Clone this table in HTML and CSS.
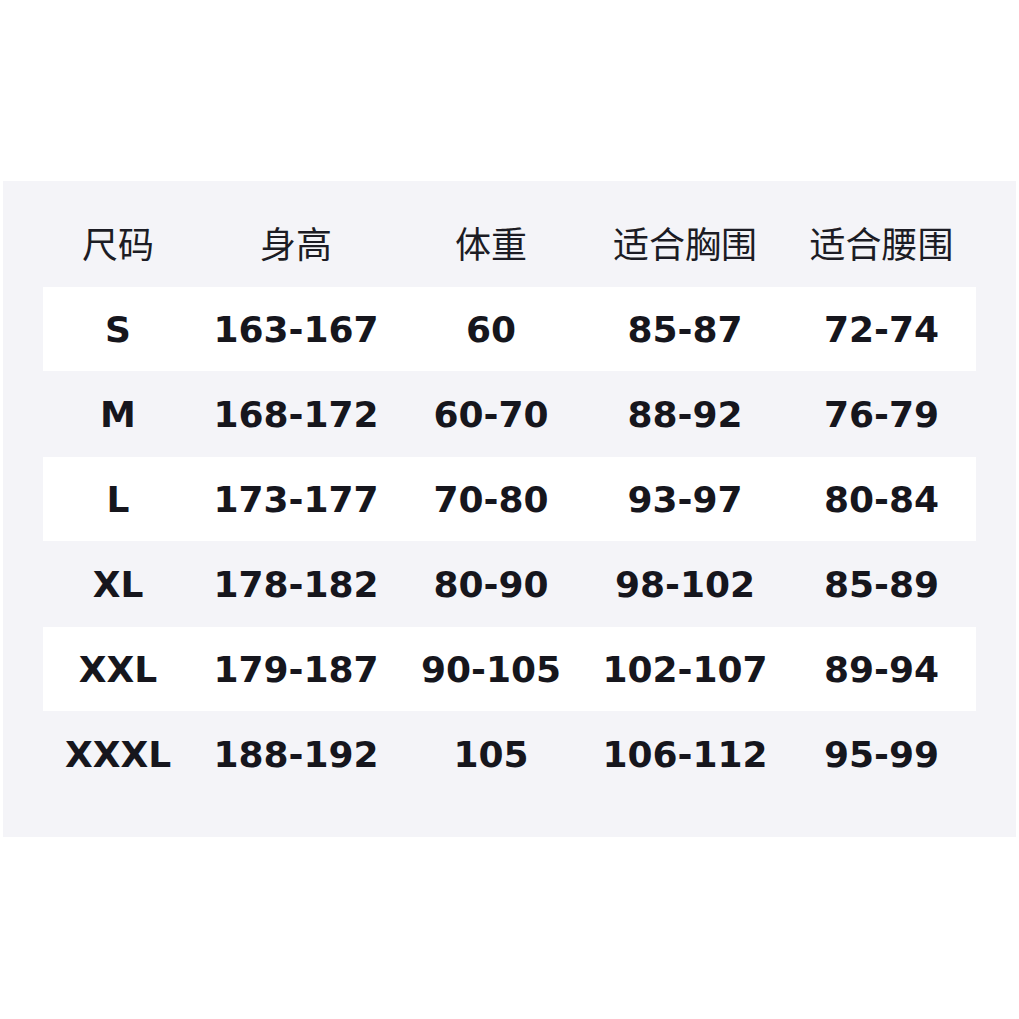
FILE: index.html
```
<!DOCTYPE html>
<html lang="zh">
<head>
<meta charset="utf-8">
<link rel="stylesheet" href="styles.css">
</head>
<body>
<div class="panel">
  <div class="table">
    <div class="row head">
      <div class="cell">尺码</div><div class="cell">身高</div><div class="cell">体重</div><div class="cell">适合胸围</div><div class="cell">适合腰围</div>
    </div>
    <div class="row white">
      <div class="cell">S</div><div class="cell">163-167</div><div class="cell">60</div><div class="cell">85-87</div><div class="cell">72-74</div>
    </div>
    <div class="row">
      <div class="cell">M</div><div class="cell">168-172</div><div class="cell">60-70</div><div class="cell">88-92</div><div class="cell">76-79</div>
    </div>
    <div class="row white">
      <div class="cell">L</div><div class="cell">173-177</div><div class="cell">70-80</div><div class="cell">93-97</div><div class="cell">80-84</div>
    </div>
    <div class="row">
      <div class="cell">XL</div><div class="cell">178-182</div><div class="cell">80-90</div><div class="cell">98-102</div><div class="cell">85-89</div>
    </div>
    <div class="row white">
      <div class="cell">XXL</div><div class="cell">179-187</div><div class="cell">90-105</div><div class="cell">102-107</div><div class="cell">89-94</div>
    </div>
    <div class="row">
      <div class="cell">XXXL</div><div class="cell">188-192</div><div class="cell">105</div><div class="cell">106-112</div><div class="cell">95-99</div>
    </div>
  </div>
</div>
</body>
</html>
```
FILE: styles.css
```
html, body {
  margin: 0;
  padding: 0;
  background: #ffffff;
}
.panel {
  margin: 181px 3px 0 3px;
  width: 1013px;
  box-sizing: border-box;
  padding: 21px 40px 41px 40px;
  background: #f4f4f8;
}
.table {
  display: flex;
  flex-direction: column;
  gap: 1px;
}
.row {
  display: grid;
  grid-template-columns: 150px 206px 184px 204px 189px;
  height: 84px;
  align-items: center;
  font-family: "DejaVu Sans", sans-serif;
  font-weight: bold;
  font-size: 36px;
  color: #16161d;
}
.row.white {
  background: #ffffff;
}
.row.head {
  font-family: "Noto Sans CJK SC", sans-serif;
  font-weight: normal;
  font-size: 36px;
  color: #1c1c24;
}
.row.head .cell {
  padding-bottom: 4px;
}
.cell {
  text-align: center;
  white-space: nowrap;
}
```
